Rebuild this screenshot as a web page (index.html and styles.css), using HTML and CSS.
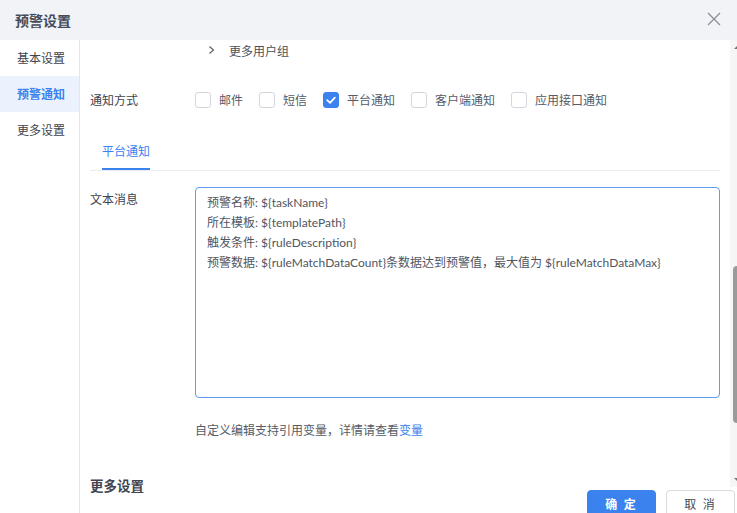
FILE: index.html
```html
<!DOCTYPE html>
<html lang="zh">
<head>
<meta charset="utf-8">
<link rel="stylesheet" href="styles.css">
</head>
<body>
<div class="dialog">
  <div class="header">
    <span class="title">预警设置</span>
    <svg class="close" width="14" height="14" viewBox="0 0 14 14"><path d="M1 1L13 13M13 1L1 13" stroke="#8a8f99" stroke-width="1.3" fill="none"/></svg>
  </div>
  <div class="body">
    <div class="sidebar">
      <div class="nav-item">基本设置</div>
      <div class="nav-item active">预警通知</div>
      <div class="nav-item">更多设置</div>
    </div>
    <div class="content">
      <div class="more-group">
        <svg class="chev" width="8" height="10" viewBox="0 0 8 10"><path d="M1.5 1.5L5.5 5L1.5 8.5" stroke="#555b66" stroke-width="1.1" fill="none"/></svg>
        <span>更多用户组</span>
      </div>
      <div class="row notify">
        <div class="label">通知方式</div>
        <div class="checks">
          <label class="check"><span class="box"></span>邮件</label>
          <label class="check"><span class="box"></span>短信</label>
          <label class="check"><span class="box on"><svg width="16" height="16" viewBox="0 0 16 16"><path d="M4.2 8.2L7 10.8L11.8 5.6" stroke="#fff" stroke-width="1.8" fill="none" stroke-linecap="round" stroke-linejoin="round"/></svg></span>平台通知</label>
          <label class="check"><span class="box"></span>客户端通知</label>
          <label class="check"><span class="box"></span>应用接口通知</label>
        </div>
      </div>
      <div class="tabs">
        <div class="tab active">平台通知</div>
      </div>
      <div class="row message">
        <div class="label">文本消息</div>
        <div class="textarea">预警名称: ${taskName}
所在模板: ${templatePath}
触发条件: ${ruleDescription}
预警数据: ${ruleMatchDataCount}条数据达到预警值，最大值为 ${ruleMatchDataMax}</div>
      </div>
      <div class="hint">自定义编辑支持引用变量，详情请查看<a class="link">变量</a></div>
      <div class="section-title">更多设置</div>
    </div>
    <div class="scrollbar">
      <span class="arrow up"></span>
      <span class="thumb"></span>
      <span class="arrow down"></span>
    </div>
  </div>
  <div class="footer">
    <button class="btn primary">确 定</button>
    <button class="btn">取 消</button>
  </div>
</div>
</body>
</html>
```
FILE: styles.css
```css
* { box-sizing: border-box; }
html, body { margin: 0; padding: 0; }
body {
  width: 737px;
  height: 513px;
  overflow: hidden;
  font-family: "Noto Sans CJK SC", "Noto Sans", sans-serif;
  font-size: 12px;
  color: #3e434d;
  background: #fff;
}
.dialog { position: relative; width: 737px; height: 513px; }
.header {
  height: 40px;
  background: #f2f3f7;
  display: flex;
  align-items: center;
  justify-content: space-between;
  padding: 0 16px 0 15px;
}
.title { font-size: 14px; font-weight: 700; color: #454b57; }
.close { display: block; margin-top: -2px; }
.body { display: flex; height: 473px; }
.sidebar {
  width: 80px;
  flex: none;
  border-right: 1px solid #e5e6ea;
}
.nav-item {
  height: 36px;
  line-height: 36px;
  padding-left: 17px;
  color: #3e434d;
}
.nav-item.active {
  background: #ebf2fd;
  color: #3b82ef;
  font-weight: 700;
}
.content {
  flex: 1;
  padding: 0 10px;
  overflow: hidden;
}
.more-group {
  height: 20px;
  display: flex;
  align-items: center;
  padding-left: 118px;
  color: #4a505b;
}
.chev { margin-right: 13px; }
.row { display: flex; }
.label { width: 105px; flex: none; color: #3e434d; }
.notify { margin-top: 32px; height: 16px; align-items: center; }
.notify .label { line-height: 16px; }
.checks { display: flex; }
.check {
  display: flex;
  align-items: center;
  line-height: 16px;
  margin-right: 16px;
  color: #555b67;
}
.box {
  width: 16px;
  height: 16px;
  border: 1px solid #d3d6dc;
  border-radius: 3px;
  margin-right: 8px;
  background: #fff;
  position: relative;
}
.box.on { background: #3b82ef; border-color: #3b82ef; }
.box.on svg { position: absolute; left: -1px; top: -1px; }
.tabs {
  margin-top: 26px;
  border-bottom: 1px solid #ebedf0;
  display: flex;
  padding-left: 12px;
}
.tab {
  height: 36px;
  line-height: 34px;
  color: #3b82ef;
  border-bottom: 2px solid #3b82ef;
}
.message { margin-top: 16px; }
.message .label { line-height: 24px; }
.textarea {
  flex: 1;
  height: 211px;
  border: 1px solid #5c9cf3;
  border-radius: 4px;
  padding: 5px 11px;
  line-height: 20px;
  white-space: pre-wrap;
  color: #50555f;
  font-family: "Lato", "Noto Sans CJK SC", sans-serif;
}
.hint {
  margin-top: 22px;
  margin-left: 105px;
  line-height: 20px;
  color: #555b67;
}
.link { color: #3b82ef; text-decoration: none; }
.section-title {
  margin-top: 35px;
  line-height: 20px;
  font-size: 13.5px;
  font-weight: 700;
  color: #3e4550;
}
.scrollbar {
  width: 7px;
  flex: none;
  height: 447px;
  background: #f6f6f7;
  position: relative;
}
.thumb {
  position: absolute;
  left: 3px;
  top: 226px;
  width: 8px;
  height: 157px;
  border-radius: 4px;
  background: #9a9a9a;
}
.arrow {
  position: absolute;
  left: 4px;
  width: 0;
  height: 0;
  border-left: 3px solid transparent;
  border-right: 3px solid transparent;
}
.arrow.up { top: 6px; border-bottom: 3px solid #777; }
.arrow.down { bottom: 6px; border-top: 3px solid #777; }
.footer {
  position: absolute;
  top: 490px;
  right: 2px;
  display: flex;
  gap: 10px;
}
.btn {
  font-family: inherit;
  font-size: 12px;
  width: 69px;
  height: 28px;
  border-radius: 4px;
  border: 1px solid #d9dbe0;
  background: #fff;
  color: #454b57;
  padding: 0;
  line-height: 26px;
  letter-spacing: 2px;
}
.btn.primary {
  background: #3b82ef;
  border-color: #3b82ef;
  color: #fff;
  font-weight: 700;
}
```
